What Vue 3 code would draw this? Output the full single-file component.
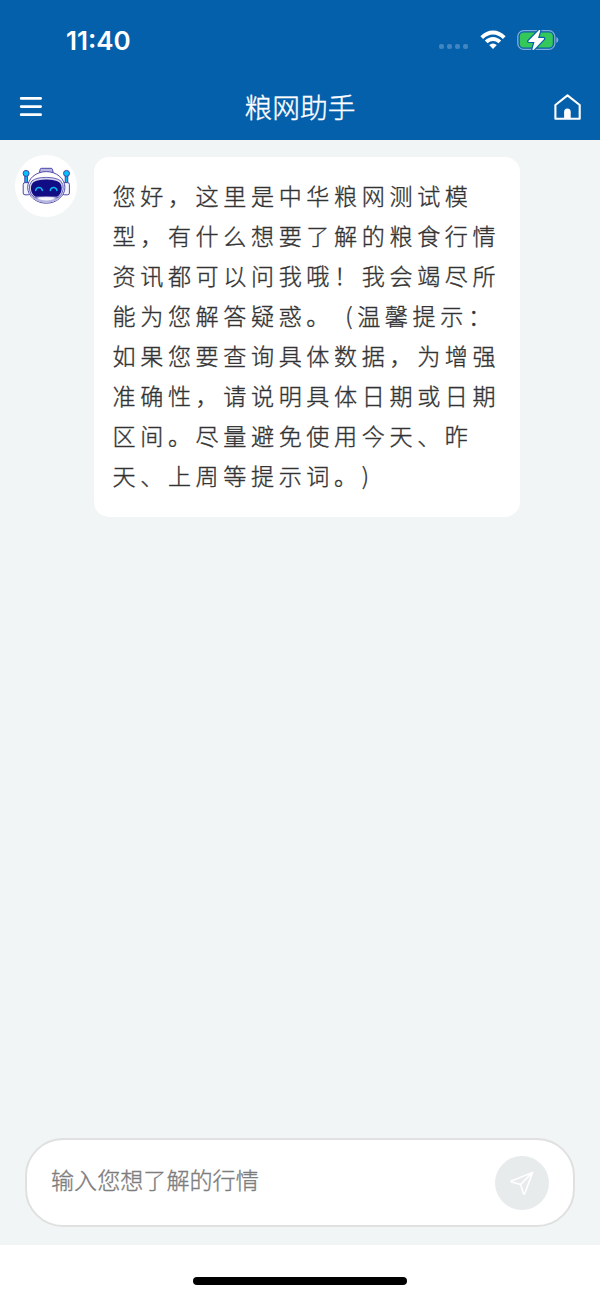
<template>
  <div class="page">
    <header class="top">
      <div class="status-bar">
        <span class="time">11:40</span>
        <div class="status-icons">
          <div class="signal">
            <i v-for="n in 4" :key="n"></i>
          </div>
          <svg class="wifi" viewBox="0 0 26 20" width="26" height="20">
            <path d="M0.4 6.2 Q6 0.4 13 0.4 Q20 0.4 25.6 6.2 L22.9 8.9 Q18.4 4.4 13 4.4 Q7.6 4.4 3.1 8.9 Z" />
            <path d="M4.8 10.6 Q8.6 7 13 7 Q17.4 7 21.2 10.6 L18.5 13.2 Q16 10.9 13 10.9 Q10 10.9 7.5 13.2 Z" />
            <path d="M9.2 15 Q13 11.9 16.8 15 L13 19 Z" />
          </svg>
          <svg class="battery" viewBox="0 0 42 22" width="42" height="22">
            <rect x="0.8" y="1.6" width="37" height="18.8" rx="6" fill="none" stroke="#7fadd5" stroke-width="1.3" />
            <path d="M39.3 8 Q41.4 9 41.4 11 Q41.4 13 39.3 14 Z" fill="#7fadd5" />
            <rect x="2.8" y="3.6" width="33" height="14.8" rx="4" fill="#34c759" />
            <path
              d="M22.1 1.1 L11.4 11.9 Q11 12.9 12 12.9 H17.5 L15.4 20.3 Q15.7 21.6 16.9 20.7 L27.1 10 Q27.4 8.9 26.4 8.9 H21 L23.3 1.8 Q23.1 0.5 22.1 1.1 Z"
              fill="#fff"
              stroke="#0560ab"
              stroke-width="2.4"
              paint-order="stroke"
            />
          </svg>
        </div>
      </div>

      <nav class="nav-bar">
        <button type="button" class="icon-button" aria-label="菜单">
          <svg viewBox="0 0 24 22" width="24" height="22">
            <path d="M2.2 2.4 H21.6 M2.2 10.6 H21.6 M2.2 18.7 H21.6" stroke="#fff" stroke-width="2.8" stroke-linecap="round" />
          </svg>
        </button>
        <h1>粮网助手</h1>
        <button type="button" class="icon-button" aria-label="首页">
          <svg viewBox="0 0 28 28" width="28" height="28" fill="none">
            <path
              d="M2.4 12 L14.5 2.4 L26.7 12 V25.8 H2.4 Z"
              stroke="#fff"
              stroke-width="2.1"
              stroke-linejoin="round"
            />
            <path d="M11.1 25.8 V19.3 Q11.1 15.6 14.4 15.6 Q17.7 15.6 17.7 19.3 V25.8 Z" fill="#fff" />
          </svg>
        </button>
      </nav>
    </header>

    <main class="chat">
      <div class="message">
        <div class="avatar">
          <svg viewBox="0 0 62 62" width="62" height="62">
            <g stroke="#3c35a0" stroke-width="0.9">
              <rect x="9.8" y="20" width="2.6" height="9" fill="#0db5f0" />
              <rect x="50.2" y="20" width="2.6" height="9" fill="#0db5f0" />
              <circle cx="11.1" cy="18.4" r="3" fill="#08c0fa" />
              <circle cx="51.5" cy="18.4" r="3" fill="#08c0fa" />
              <rect x="8.2" y="27.6" width="7" height="12.2" rx="1.8" fill="#f3f3fc" />
              <rect x="47.4" y="27.6" width="7" height="12.2" rx="1.8" fill="#f3f3fc" />
              <path d="M24.3 18 L25.2 14.2 Q25.5 13.3 26.4 13.3 H36.2 Q37.1 13.3 37.4 14.2 L38.3 18 Z" fill="#b9b8e3" />
              <ellipse cx="31.3" cy="32.4" rx="18.6" ry="15.8" fill="#fff" />
            </g>
            <path d="M14 38 Q18 47.4 31.3 47.6 Q44.6 47.4 48.6 38 Q43 44 31.3 44 Q19.6 44 14 38 Z" fill="#b6b5df" />
            <path
              d="M31.3 22.4 Q41 22.4 45.6 25.8 Q49 29.2 48.2 34.5 Q47.6 40 43 42.4 Q38.5 44 31.3 44 Q24 44 19.6 42.4 Q15 40 14.4 34.5 Q13.6 29.2 17 25.8 Q21.6 22.4 31.3 22.4 Z"
              fill="#d6d5ee"
              stroke="#4842a6"
              stroke-width="0.8"
            />
            <path
              d="M31.3 24.4 Q40 24.4 44.2 27.2 Q47.2 30 46.6 34.5 Q46 39.4 42 41.8 Q31.3 41.2 20.6 41.8 Q16.6 39.4 16 34.5 Q15.4 30 18.4 27.2 Q22.6 24.4 31.3 24.4 Z"
              fill="#120c85"
            />
            <path d="M22 43.6 Q31.3 40.8 40.6 43.6 Q36 45.6 31.3 45.6 Q26.6 45.6 22 43.6 Z" fill="#f6f6fd" />
            <path
              d="M20.7 35.4 Q21.2 32.4 24 32.4 Q26.8 32.4 27.3 35.4 M35.3 35.4 Q35.8 32.4 38.6 32.4 Q41.4 32.4 41.9 35.4"
              fill="none"
              stroke="#08b9ef"
              stroke-width="1.5"
              stroke-linecap="round"
            />
          </svg>
        </div>
        <div class="bubble">
          <p v-for="line in greetingLines" :key="line">{{ line }}</p>
        </div>
      </div>
    </main>

    <form class="composer" @submit.prevent="handleSend">
      <div class="input-box">
        <input v-model="question" type="text" placeholder="输入您想了解的行情" />
        <button type="submit" class="send-button" aria-label="发送">
          <svg viewBox="0 0 24 24" width="24" height="24" fill="none">
            <path
              d="M22.6 1.4 L1.3 9.9 Q0.6 10.5 1.4 10.9 L10.7 13.4 L13.4 22.6 Q14.2 23.6 14.8 22.5 Z M22.6 1.4 L10.7 13.4"
              stroke="#fff"
              stroke-width="1.6"
              stroke-linejoin="round"
            />
          </svg>
        </button>
      </div>
    </form>

    <footer class="home-area">
      <div class="home-indicator"></div>
    </footer>
  </div>
</template>

<script setup>
import { ref } from "vue";

const question = ref("");

const greetingLines = [
  "您好，这里是中华粮网测试模",
  "型，有什么想要了解的粮食行情",
  "资讯都可以问我哦！我会竭尽所",
  "能为您解答疑惑。 (温馨提示：",
  "如果您要查询具体数据，为增强",
  "准确性，请说明具体日期或日期",
  "区间。尽量避免使用今天、昨",
  "天、上周等提示词。)",
];

const handleSend = () => {
  question.value = "";
};
</script>

<style>
body {
  margin: 0;
}
</style>

<style scoped>
.page {
  display: flex;
  flex-direction: column;
  height: 1298px;
  background: #f1f5f6;
  font-family: "Noto Sans CJK SC", sans-serif;
  font-weight: 300;
  -webkit-text-stroke-width: 0.35px;
}

.top {
  height: 140px;
  background: #0560ab;
  color: #ffffff;
}

.status-bar {
  display: flex;
  justify-content: space-between;
  align-items: center;
  height: 74px;
  padding: 6px 41px 0 66px;
  box-sizing: border-box;
}

.time {
  font-family: Inter, sans-serif;
  font-size: 26px;
  font-weight: 600;
  -webkit-text-stroke-width: 0;
}

.status-icons {
  display: flex;
  align-items: center;
}

.signal {
  display: flex;
  gap: 3px;
  margin: 13px 12px 0 0;
}

.signal i {
  width: 5px;
  height: 5px;
  border-radius: 2px;
  background: #4285c0;
}

.wifi {
  margin-right: 11px;
  fill: #ffffff;
}

.nav-bar {
  display: flex;
  justify-content: space-between;
  align-items: center;
  height: 66px;
  padding: 0 19px;
}

.nav-bar h1 {
  margin: 0;
  padding: 0 0 3px 4px;
  font-size: 27.7px;
  font-weight: 300;
  line-height: 40px;
}

.icon-button {
  display: flex;
  padding: 0;
  border: none;
  background: none;
}

.chat {
  flex: 1;
  padding: 17px 16px 0 15px;
}

.message {
  display: flex;
  align-items: flex-start;
  gap: 17px;
}

.avatar {
  display: flex;
  width: 62px;
  height: 62px;
  margin-top: -2px;
  border-radius: 50%;
  background: #ffffff;
}

.bubble {
  width: 426px;
  height: 360px;
  padding: 18px 18.5px;
  box-sizing: border-box;
  border-radius: 15px;
  background: #ffffff;
  color: #333333;
}

.bubble p {
  margin: 0;
  font-size: 23.08px;
  line-height: 40px;
  letter-spacing: 4.615px;
  word-spacing: 1.5px;
  white-space: nowrap;
  text-spacing-trim: space-all;
}

.composer {
  padding: 0 25px 18px;
}

.input-box {
  display: flex;
  align-items: center;
  height: 89px;
  padding: 0 24px;
  box-sizing: border-box;
  border: 2px solid #e0e0e0;
  border-radius: 38px;
  background: #ffffff;
}

.input-box input {
  flex: 1;
  min-width: 0;
  padding: 0 0 7px;
  border: none;
  outline: none;
  background: none;
  font-family: inherit;
  font-size: 23.08px;
  font-weight: 300;
}

.input-box input::placeholder {
  color: #7d7d7d;
}

.send-button {
  display: flex;
  justify-content: center;
  align-items: center;
  width: 54px;
  height: 54px;
  padding: 0;
  border: none;
  border-radius: 50%;
  background: #e7ebec;
}

.home-area {
  display: flex;
  justify-content: center;
  height: 53px;
  background: #ffffff;
}

.home-indicator {
  width: 214px;
  height: 8px;
  margin-top: 32px;
  border-radius: 4px;
  background: #000000;
}
</style>
